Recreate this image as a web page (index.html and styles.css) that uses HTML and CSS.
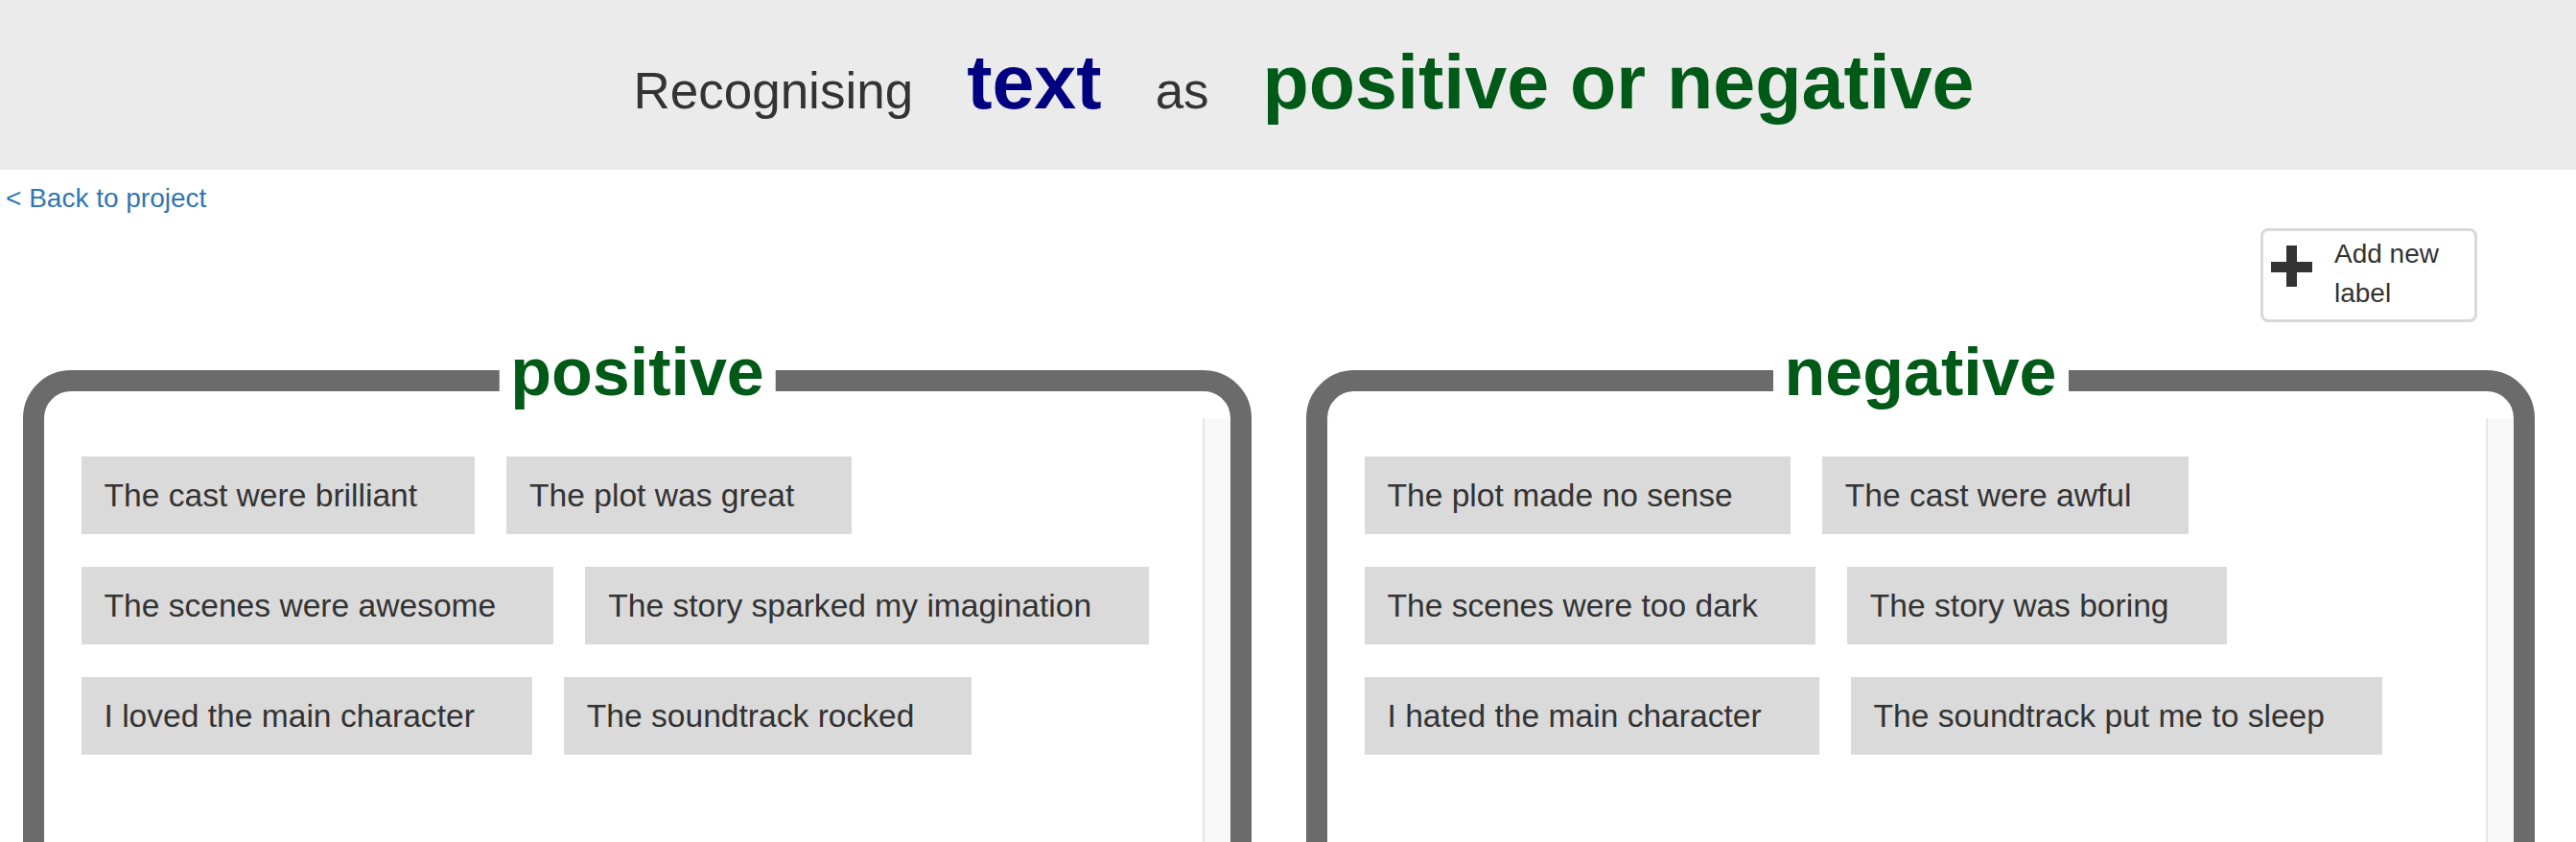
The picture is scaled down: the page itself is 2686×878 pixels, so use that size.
FILE: index.html
```html
<!DOCTYPE html>
<html lang="en">
<head>
<meta charset="utf-8">
<title>Recognising text as positive or negative</title>
<link rel="stylesheet" href="styles.css">
</head>
<body>
<header class="title-bar">
  <span class="t-plain">Recognising</span>
  <span class="t-type">text</span>
  <span class="t-plain">as</span>
  <span class="t-labels">positive or negative</span>
</header>
<div class="back-row"><a class="back-link" href="#">&lt; Back to project</a></div>
<div class="toolbar">
  <button class="add-label" type="button">
    <svg class="plus" width="43" height="43" viewBox="0 0 43 43" aria-hidden="true">
      <rect x="16" y="0" width="11" height="43" fill="#333"/>
      <rect x="0" y="17" width="43" height="11" fill="#333"/>
    </svg>
    <span class="add-text">Add new label</span>
  </button>
</div>
<main class="buckets">
  <section class="bucket">
    <h2 class="bucket-title">positive</h2>
    <div class="bucket-body">
      <div class="items">
        <div class="item">The cast were brilliant</div>
        <div class="item">The plot was great</div>
        <div class="item">The scenes were awesome</div>
        <div class="item">The story sparked my imagination</div>
        <div class="item">I loved the main character</div>
        <div class="item">The soundtrack rocked</div>
      </div>
      <div class="track"></div>
    </div>
  </section>
  <section class="bucket">
    <h2 class="bucket-title">negative</h2>
    <div class="bucket-body">
      <div class="items">
        <div class="item">The plot made no sense</div>
        <div class="item">The cast were awful</div>
        <div class="item">The scenes were too dark</div>
        <div class="item">The story was boring</div>
        <div class="item">I hated the main character</div>
        <div class="item">The soundtrack put me to sleep</div>
      </div>
      <div class="track"></div>
    </div>
  </section>
</main>
</body>
</html>
```
FILE: styles.css
```css
html, body {
  margin: 0;
  padding: 0;
  overflow: hidden;
  background: #fff;
}
body {
  font-family: "Liberation Sans", Arial, sans-serif;
  color: #333;
}
.title-bar {
  box-sizing: border-box;
  height: 177px;
  background: #ebebeb;
  display: flex;
  justify-content: center;
  align-items: baseline;
  gap: 56px;
  padding: 40px 0 0 33px;
}
.t-plain {
  font-size: 53px;
  color: #333;
}
.t-type {
  font-size: 79px;
  font-weight: bold;
  color: #000080;
}
.t-labels {
  font-size: 79px;
  font-weight: bold;
  color: #005a17;
}
.back-row {
  margin-top: 14px;
  padding-left: 6px;
  line-height: 32px;
  font-size: 28px;
}
.back-link {
  color: #2f76b5;
  text-decoration: none;
}
.toolbar {
  display: flex;
  justify-content: flex-end;
  padding-right: 103px;
  margin-top: 15px;
}
.add-label {
  box-sizing: border-box;
  width: 226px;
  height: 98px;
  display: flex;
  align-items: flex-start;
  padding: 3px 8px 7px 8px;
  border: 3px solid #d9d9d9;
  border-radius: 8px;
  background: #fff;
  font-family: inherit;
  color: #333;
  text-align: left;
  cursor: pointer;
}
.plus {
  flex: none;
  margin-top: 12px;
}
.add-text {
  margin-left: 23px;
  font-size: 28px;
  line-height: 41px;
}
.buckets {
  display: flex;
  gap: 57px;
  padding-left: 24px;
  margin-top: 50px;
}
.bucket {
  position: relative;
  box-sizing: border-box;
  width: 1281px;
  height: 600px;
  border: 22px solid #6b6b6b;
  border-radius: 50px;
  background: #fff;
}
.bucket-title {
  position: absolute;
  top: -55px;
  left: 50%;
  transform: translateX(-50%);
  margin: 0;
  padding: 0 12px;
  background: #fff;
  font-size: 70px;
  line-height: 70px;
  font-weight: bold;
  color: #005a17;
  white-space: nowrap;
}
.bucket-body {
  display: flex;
  margin-top: 28px;
  height: 540px;
}
.items {
  flex: 1;
  display: flex;
  flex-wrap: wrap;
  align-content: flex-start;
  padding: 23px 4px 0 22px;
}
.item {
  box-sizing: border-box;
  height: 81px;
  margin: 17px 16.5px;
  padding: 0 60px 0 24px;
  display: flex;
  align-items: center;
  background: #dadada;
  color: #333;
  font-size: 33.6px;
  white-space: nowrap;
}
.track {
  flex: none;
  box-sizing: border-box;
  width: 29px;
  background: #f8f8f8;
  border-left: 2px solid #e6e6e6;
}
```
